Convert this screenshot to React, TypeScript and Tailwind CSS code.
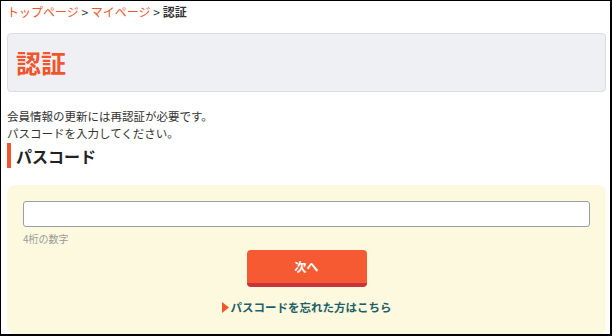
import React from "react";

const App = () => {
  return (
    <div
      className="w-[612px] h-[336px] overflow-hidden bg-white border-l border-t border-r-2 border-b-2 border-black pl-[6px] pr-[4px]"
      style={{ fontFamily: '"Noto Sans CJK JP", "Noto Sans", sans-serif' }}
    >
      <nav className="pt-[3px] text-[12px] leading-[16px] text-[#333]">
        <span className="text-[#f0552d]">トップページ</span>
        <span> &gt; </span>
        <span className="text-[#f0552d]">マイページ</span>
        <span> &gt; </span>
        <span className="font-bold">認証</span>
      </nav>

      <div className="mt-[13px] h-[59px] rounded-[4px] border border-[#dcdde0] bg-[#eff0f3] flex items-center pl-[8px]">
        <h1 className="text-[25px] font-bold text-[#f0552d] leading-none">認証</h1>
      </div>

      <div className="mt-[16px] text-[11.5px] leading-[17px] text-[#333]">
        <p>会員情報の更新には再認証が必要です。</p>
        <p>パスコードを入力してください。</p>
      </div>

      <div className="mt-[1px] flex items-center h-[25px] border-l-[4px] border-[#f0552d] pl-[5px]">
        <h2 className="text-[16px] font-bold text-[#222] leading-none">パスコード</h2>
      </div>

      <div className="mt-[17px] h-[149px] rounded-[8px] bg-[#fdf9de] px-[16px] pt-[16px]">
        <input
          type="text"
          className="block w-full h-[26px] rounded-[3px] border border-[#9a9ea6] bg-white"
        />
        <p className="mt-[5px] text-[10px] leading-[14px] text-[#999]">4桁の数字</p>
        <div className="mt-[4px] flex justify-center">
          <button className="w-[120px] h-[37px] rounded-[4px] bg-[#f55a33] border-b-[4px] border-[#c9343a] text-white text-[12px] font-bold">
            次へ
          </button>
        </div>
        <div className="mt-[12px] flex justify-center items-center text-[11.5px] font-bold text-[#1d5f6a] leading-[16px]">
          <svg width="7" height="11" viewBox="0 0 7 11" className="mr-[2px]">
            <polygon points="0,0 7,5.5 0,11" fill="#f0552d" />
          </svg>
          <span>パスコードを忘れた方はこちら</span>
        </div>
      </div>
    </div>
  );
};

export default App;
